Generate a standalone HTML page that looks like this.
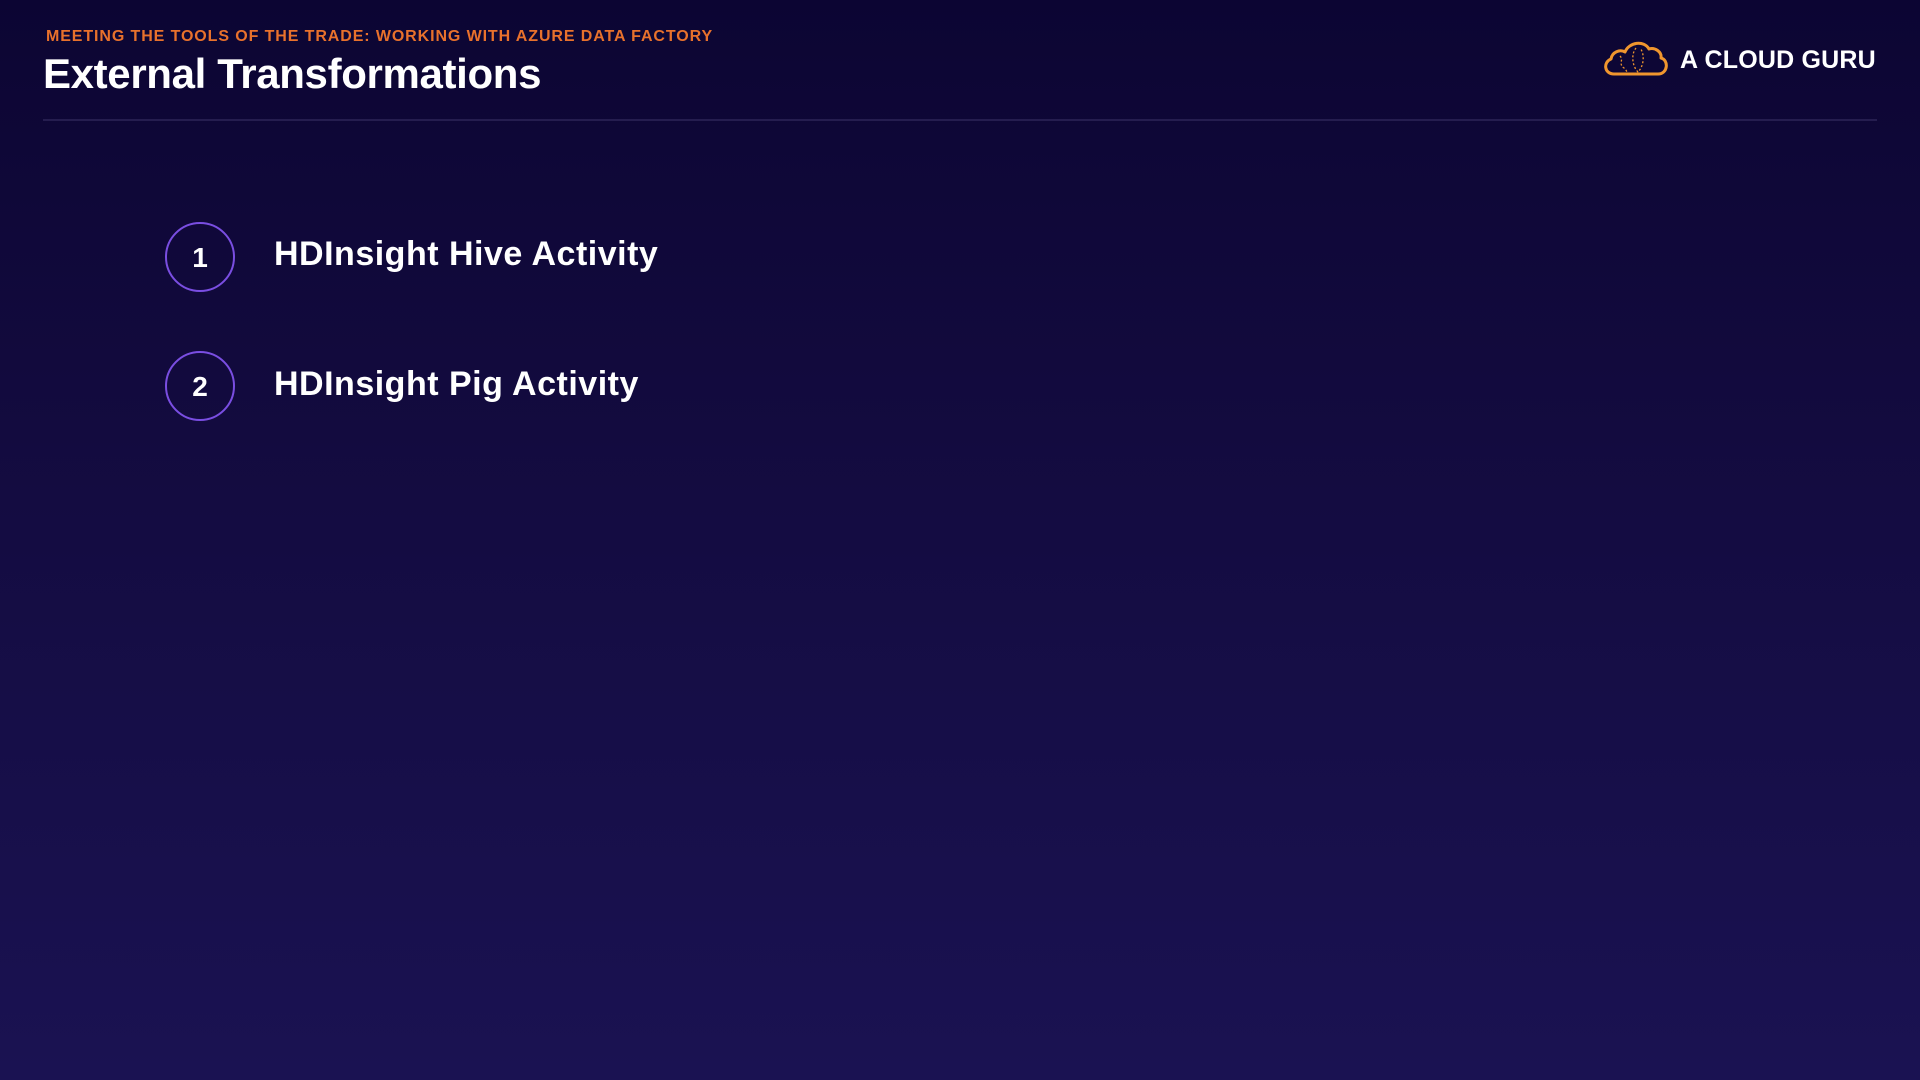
<!DOCTYPE html>
<html><head><meta charset="utf-8"><style>
html,body{margin:0;padding:0}
body{width:1920px;height:1080px;overflow:hidden;position:relative;font-family:"Liberation Sans",sans-serif;background:linear-gradient(180deg,#0c0533 0%,#130b3f 40%,#1a1252 100%);}
.sub{position:absolute;left:46px;top:28px;font-size:16px;font-weight:bold;color:#e8712c;letter-spacing:0.9px;white-space:nowrap}
.title{position:absolute;left:43px;top:50px;font-size:42px;font-weight:bold;color:#fff;letter-spacing:-0.35px;white-space:nowrap}
.line{position:absolute;left:43px;top:119px;width:1834px;height:2px;background:#251d4f}
.circ{position:absolute;width:66px;height:66px;border:2px solid #7a4ee2;border-radius:50%;color:#fff;font-weight:bold;font-size:28px;text-align:center;line-height:68px}
.item{position:absolute;left:274px;font-size:34px;font-weight:bold;color:#fff;white-space:nowrap;letter-spacing:0.5px}
.logo{position:absolute;left:1680px;top:46px;font-size:25px;font-weight:bold;color:#fff;white-space:nowrap;letter-spacing:0.2px}
</style></head><body>
<div class="sub">MEETING THE TOOLS OF THE TRADE: WORKING WITH AZURE DATA FACTORY</div>
<div class="title">External Transformations</div>
<div class="line"></div>
<div class="circ" style="left:165px;top:222px">1</div>
<div class="item" style="top:235px">HDInsight Hive Activity</div>
<div class="circ" style="left:165px;top:351px">2</div>
<div class="item" style="top:365px">HDInsight Pig Activity</div>
<svg style="position:absolute;left:1602px;top:36px" width="68" height="42" viewBox="0 0 68 42">
<path d="M12 38 C2 38 1 26 9 23 C10 16 18 13 23 16 C27 6 42 4 47 13 C53 11 60 16 59 22 C67 24 66 38 56 38 Z" fill="none" stroke="#f0962e" stroke-width="3" stroke-linejoin="round"/>
<path d="M18 20 C22 24 16 28 22 32 C26 35 24 38 28 38 M34 12 C29 18 30 30 36 36 C42 30 43 18 38 12" fill="none" stroke="#f0962e" stroke-width="1.3" stroke-dasharray="2 2"/>
</svg>
<div class="logo">A CLOUD GURU</div>
</body></html>
